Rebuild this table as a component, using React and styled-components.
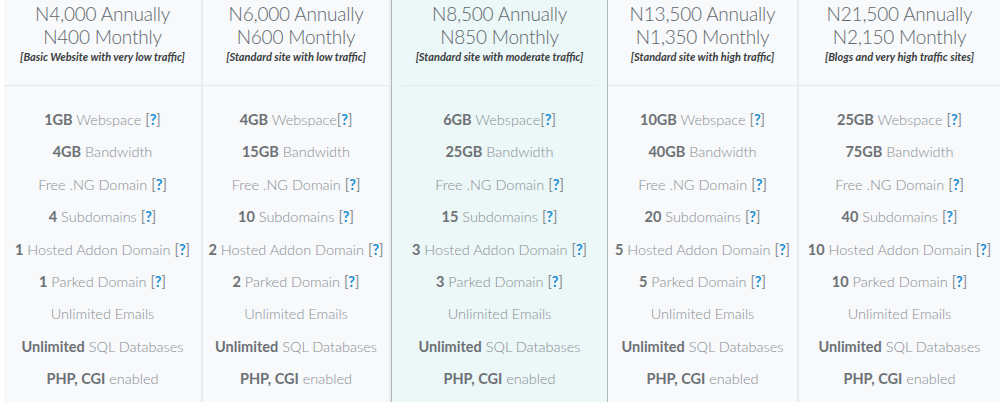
import React from 'react'
import styled, { createGlobalStyle } from 'styled-components'

const GlobalStyle = createGlobalStyle`
  body {
    margin: 0;
    background: #ffffff;
    font-family: Lato, "Open Sans", sans-serif;
  }
`

const plans = [
  {
    annual: 'N4,000', monthly: 'N400', note: '[Basic Website with very low traffic]',
    space: '1GB', band: '4GB', subs: '4', addon: '1', parked: '1', spaceGap: true,
  },
  {
    annual: 'N6,000', monthly: 'N600', note: '[Standard site with low traffic]',
    space: '4GB', band: '15GB', subs: '10', addon: '2', parked: '2', spaceGap: false,
  },
  {
    annual: 'N8,500', monthly: 'N850', note: '[Standard site with moderate traffic]',
    space: '6GB', band: '25GB', subs: '15', addon: '3', parked: '3', spaceGap: false, featured: true,
  },
  {
    annual: 'N13,500', monthly: 'N1,350', note: '[Standard site with high traffic]',
    space: '10GB', band: '40GB', subs: '20', addon: '5', parked: '5', spaceGap: true,
  },
  {
    annual: 'N21,500', monthly: 'N2,150', note: '[Blogs and very high traffic sites]',
    space: '25GB', band: '75GB', subs: '40', addon: '10', parked: '10', spaceGap: true,
  },
]

function Help() {
  return <Hint>[<Q>?</Q>]</Hint>
}

function Plan({ plan }) {
  return (
    <Column featured={plan.featured}>
      <Head featured={plan.featured}>
        <Price>{plan.annual} Annually</Price>
        <Price>{plan.monthly} Monthly</Price>
        <Note>{plan.note}</Note>
      </Head>
      <Features>
        <Row><b>{plan.space}</b> Webspace{plan.spaceGap ? ' ' : ''}<Help /></Row>
        <Row><b>{plan.band}</b> Bandwidth</Row>
        <Row>Free .NG Domain <Help /></Row>
        <Row><b>{plan.subs}</b> Subdomains <Help /></Row>
        <Row><b>{plan.addon}</b> Hosted Addon Domain <Help /></Row>
        <Row><b>{plan.parked}</b> Parked Domain <Help /></Row>
        <Row>Unlimited Emails</Row>
        <Row><b>Unlimited</b> SQL Databases</Row>
        <Row><b>PHP, CGI</b> enabled</Row>
      </Features>
    </Column>
  )
}

export default function App() {
  return (
    <>
      <GlobalStyle />
      <Table>
        {plans.map(p => <Plan key={p.annual} plan={p} />)}
      </Table>
    </>
  )
}

const Table = styled.div`
  display: grid;
  grid-template-columns: 199px 188px 217px 191px 1fr;
  padding-left: 4px;
  height: 402px;
  overflow: hidden;
`

const Column = styled.div`
  display: flex;
  flex-direction: column;
  background: ${p => (p.featured ? '#ecf7f8' : '#f7f9fb')};
  border-left: ${p => (p.featured ? '1px solid #b3b8bc' : 'none')};
  border-right: ${p => (p.featured ? '1px solid #b3b8bc' : '2px solid #e9ecef')};
  &:last-child {
    border-right: none;
  }
`

const Head = styled.div`
  height: 86px;
  box-sizing: border-box;
  padding-top: 2px;
  margin: ${p => (p.featured ? '0 10px' : '0')};
  border-bottom: 1px solid #e6e9ec;
  text-align: center;
`

const Price = styled.div`
  font-size: 19px;
  line-height: 23px;
  font-weight: 300;
  letter-spacing: -0.2px;
  color: #60666b;
`

const Note = styled.div`
  margin-top: 2px;
  font-size: 11px;
  line-height: 14px;
  font-weight: 700;
  font-style: italic;
  color: #3a3d40;
`

const Features = styled.div`
  padding-top: 18px;
  display: flex;
  flex-direction: column;
`

const Row = styled.div`
  height: 32.4px;
  line-height: 32.4px;
  text-align: center;
  font-size: 14.5px;
  font-weight: 300;
  color: #8a8e92;
  white-space: nowrap;
  b {
    font-weight: 700;
    color: #6d7175;
  }
`

const Hint = styled.span`
  font-weight: 400;
  color: #8a8e92;
`

const Q = styled.span`
  font-weight: 700;
  color: #1b8ed3;
`
